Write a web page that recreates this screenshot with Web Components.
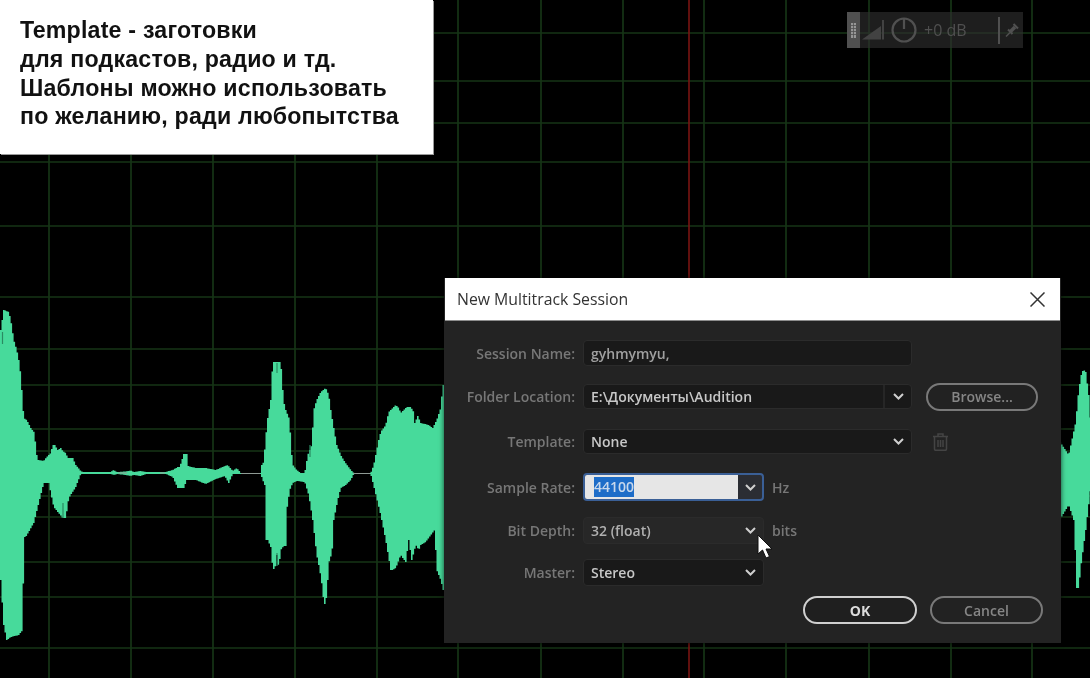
<!DOCTYPE html>
<html lang="ru">
<head>
<meta charset="utf-8">
<title>New Multitrack Session</title>
<style>
  html, body { margin: 0; background: #000; overflow: hidden; }
</style>
</head>
<body>
<audio-stage>
  <note-card slot="overlay">
    <div>Template - заготовки</div>
    <div>для подкастов, радио и тд.</div>
    <div>Шаблоны можно использовать</div>
    <div>по желанию, ради любопытства</div>
  </note-card>
  <level-hud slot="overlay"></level-hud>
  <session-dialog slot="overlay" heading="New Multitrack Session">
    <form-row style="margin-top:19px;height:26px">
      <span slot="label">Session Name:</span>
      <drop-field style="width:329px;color:#a0a0a0" noarrow>gyhmymyu,</drop-field>
    </form-row>
    <form-row style="margin-top:18px;height:25px">
      <span slot="label">Folder Location:</span>
      <drop-field style="width:329px" split>E:\Документы\Audition</drop-field>
      <pill-button slot="after" style="margin-left:14px;width:112px">Browse...</pill-button>
    </form-row>
    <form-row style="margin-top:20px;height:25px">
      <span slot="label">Template:</span>
      <drop-field style="width:329px">None</drop-field>
      <trash-icon slot="after" style="margin-left:21px"></trash-icon>
    </form-row>
    <form-row style="margin-top:19px;height:28px">
      <span slot="label">Sample Rate:</span>
      <drop-field style="width:181px" focused><mark>44100</mark></drop-field>
      <span slot="after" class="unit">Hz</span>
    </form-row>
    <form-row style="margin-top:16px;height:27px">
      <span slot="label">Bit Depth:</span>
      <drop-field style="width:181px" hovered>32 (float)</drop-field>
      <span slot="after" class="unit">bits</span>
    </form-row>
    <form-row style="margin-top:15px;height:27px">
      <span slot="label">Master:</span>
      <drop-field style="width:181px">Stereo</drop-field>
    </form-row>
    <div slot="footer" style="display:flex;gap:13px">
      <pill-button primary style="width:114px">OK</pill-button>
      <pill-button style="width:113px">Cancel</pill-button>
    </div>
  </session-dialog>
  <mouse-pointer slot="overlay"></mouse-pointer>
</audio-stage>

<script>
// waveform outline, read off the reference: [x, y] pairs, upper and lower edge
const upperEdge = [[0,330],[3,310],[8,312],[10,320],[13,340],[16,350],[19,365],[21,390],[23,418],[26,420],[30,428],[34,433],[35,450],[37,460],[43,461],[46,457],[50,453],[52,445],[54,445],[57,450],[60,448],[62,451],[65,453],[67,458],[72,458],[75,465],[80,471],[82,472],
  [110,472],[113,470],[116,472],[125,471.5],[130,470.5],[133,472],[140,471],[145,472],[165,472],[172,470],[177,467],[179,467],[183,454],[186,454],[187,466],[195,468],[205,468],[215,470],[224,466],[227,465],[232,471],[236,468],[240,473],[260,473],[261,465],[263,462],[265,437],[267,418],[270,400],[272,362],[280,362],[282,390],[283,402],[285,410],[289,420],[290,445],[292,465],[296,470],[300,473],[304,473],[307,455],[309,450],[311,445],[313,410],[316,400],[320,392],[325,388],[328,395],[330,410],[333,428],[336,445],[340,455],[344,462],[350,470],[353,473],[370,473],[373,465],[378,440],[380,432],[385,425],[388,412],[392,408],[395,405],[398,408],[400,413],[403,410],[406,407],[410,407],[413,412],[414,423],[417,416],[420,423],[428,425],[432,428],[436,420],[440,408],[442,385],[446,385]];
const lowerEdge = [[0,580],[3,625],[6,640],[10,637],[18,635],[22,630],[23,537],[25,537],[33,523],[37,507],[43,483],[48,483],[53,507],[62,518],[65,518],[68,498],[75,487],[80,474],[82,474],
  [110,474],[113,475],[116,474],[125,475],[130,476],[133,475],[140,476],[145,474],[165,474],[172,477],[177,488],[183,488],[186,480],[195,480],[205,484],[215,479],[224,476],[228,483],[232,474],[260,474],[262,480],[264,485],[265,540],[267,540],[270,547],[272,568],[274,570],[276,555],[278,568],[280,550],[283,546],[286,546],[286,510],[289,490],[292,483],[296,481],[304,482],[308,495],[312,520],[316,555],[319,570],[322,590],[323,604],[325,604],[327,580],[329,555],[331,558],[333,520],[337,500],[340,488],[345,485],[350,480],[353,474],[370,474],[374,490],[380,515],[385,540],[390,570],[392,570],[395,568],[400,555],[402,558],[405,562],[408,540],[411,560],[415,545],[418,550],[420,545],[425,542],[430,535],[434,530],[436,570],[440,580],[443,592],[446,595]];
const upperRight = [[1058,440],[1060,443],[1068,455],[1075,422],[1078,390],[1081,372],[1083,370],[1085,372],[1088,395],[1090,425]];
const lowerRight = [[1058,520],[1060,518],[1068,505],[1073,520],[1075,560],[1076,588],[1078,588],[1080,567],[1085,530],[1090,487]];

function edgeAt(edge, x) {
  for (let i = 1; i < edge.length; i++) {
    if (x <= edge[i][0]) {
      const a = edge[i - 1], b = edge[i];
      const t = (x - a[0]) / ((b[0] - a[0]) || 1);
      return a[1] + (b[1] - a[1]) * t;
    }
  }
  return edge[edge.length - 1][1];
}

function wavePath(top, bottom, from, to) {
  let d = '';
  for (let x = from; x < to; x += 1.5) {
    const y1 = edgeAt(top, x).toFixed(1);
    const y2 = edgeAt(bottom, x).toFixed(1);
    d += `M${x} ${y1}H${x + 1.6}V${y2}H${x}Z`;
  }
  return d;
}

const stageTemplate = document.createElement('template');
stageTemplate.innerHTML = `
  <style>
    :host { display: block; width: 1090px; height: 678px; position: relative; background: #000; overflow: hidden; filter: blur(0.55px); }
    svg { display: block; }
    .line { stroke: #163416; stroke-width: 1.7; }
  </style>
  <svg width="1090" height="678" viewBox="0 0 1090 678"></svg>
  <slot name="overlay"></slot>
`;

class AudioStage extends HTMLElement {
  connectedCallback() {
    const root = this.attachShadow({ mode: 'open' });
    root.appendChild(stageTemplate.content.cloneNode(true));
    const cols = [49, 131, 213, 295, 377, 458, 541, 623, 704, 786, 869, 951, 1032];
    const rows = [33, 81, 123, 162, 226, 297, 349, 385, 429, 451, 496, 517, 562, 597, 648];
    let lines = '';
    cols.forEach(x => { lines += `<line class="line" x1="${x}" x2="${x}" y1="0" y2="678"/>`; });
    rows.forEach(y => { lines += `<line class="line" x1="0" x2="1090" y1="${y}" y2="${y}"/>`; });
    root.querySelector('svg').innerHTML = `
      ${lines}
      <line x1="689" x2="689" y1="0" y2="678" stroke="#7a1512" stroke-width="1.6"/>
      <path fill="#47da9b" d="${wavePath(upperEdge, lowerEdge, 0, 446)}${wavePath(upperRight, lowerRight, 1058, 1090)}"/>
      <path stroke="#8f9a94" stroke-width="1.2" fill="none" d="M241 473.5H260M353 473.5H370M118 473H127M160 473H165"/>
      <path stroke="#2a8a62" stroke-width="1.2" fill="none" d="M2.5 332V344M277 363V373M310 445V457M277 553V566M63 503V518"/>
    `;
  }
}

const noteTemplate = document.createElement('template');
noteTemplate.innerHTML = `
  <style>
    :host { display: block; position: absolute; left: 0; top: 0; width: 413px; height: 134px; padding: 16px 0 4px 20px; background: #fff; box-shadow: 1px 1px 0 #9a9a9a;
      font: 700 23.2px/28.8px "Liberation Sans", Arial, sans-serif; color: #111; letter-spacing: .2px; white-space: nowrap; }
  </style>
  <slot></slot>
`;

class NoteCard extends HTMLElement {
  connectedCallback() {
    this.attachShadow({ mode: 'open' }).appendChild(noteTemplate.content.cloneNode(true));
  }
}

const hudTemplate = document.createElement('template');
hudTemplate.innerHTML = `
  <style>
    :host { display: flex; align-items: center; position: absolute; left: 847px; top: 12px; width: 176px; height: 36px; background: rgba(48,48,48,.62);
      font: 400 16px "Open Sans", sans-serif; color: #505050; }
    .grip { width: 13px; height: 100%; background: #505050; display: flex; align-items: center; justify-content: center; }
    .meter { margin-left: 2px; }
    .knob { margin-left: 6px; }
    .db { margin-left: 7px; width: 74px; }
    .sep { width: 2px; height: 27px; background: #505050; }
    .pin { margin-left: 5px; }
  </style>
  <div class="grip">
    <svg width="5" height="15" viewBox="0 0 5 15"><path d="M0 0h5v15H0z" fill="#969696"/><path d="M0 2.5h5M0 5.5h5M0 8.5h5M0 11.5h5M2.5 0v15" stroke="#505050" stroke-width=".8"/></svg>
  </div>
  <svg class="meter" width="23" height="20" viewBox="0 0 23 20" fill="#424242">
    <path d="M0 19.500L19 6v13.500zM20 19.500V0h2v19.500z"/>
  </svg>
  <svg class="knob" width="26" height="26" viewBox="0 0 26 26" fill="none" stroke="#505050" stroke-width="2.200">
    <circle cx="13" cy="13" r="11.500"/><path d="M13 1v11"/>
  </svg>
  <span class="db">+0 dB</span>
  <span class="sep"></span>
  <svg class="pin" width="14" height="14" viewBox="0 0 14 14" fill="none" stroke="#505050">
    <path d="M1 13.500L5 9.500" stroke-width="1.500"/>
    <path d="M5 9l5-5" stroke-width="3.500"/>
    <path d="M3 6.500L7.500 11M8.500 1L13 5.500" stroke-width="2"/>
  </svg>
`;

class LevelHud extends HTMLElement {
  connectedCallback() {
    this.attachShadow({ mode: 'open' }).appendChild(hudTemplate.content.cloneNode(true));
  }
}

const dialogTemplate = document.createElement('template');
dialogTemplate.innerHTML = `
  <style>
    :host { display: flex; flex-direction: column; position: absolute; left: 444px; top: 278px; width: 617px; height: 365px; background: #232323;
      box-shadow: 0 0 5px rgba(0,0,0,.7); font: 600 14px "Open Sans", sans-serif; color: #cfcfcf; }
    .title { display: flex; align-items: center; justify-content: space-between; height: 42px; margin: 0 1px 0 1px; padding: 0 15px 0 12px; background: #fff; border-bottom: 1px solid #8d8d8d;
      font-weight: 400; font-size: 15.8px; color: #333; }
    .foot { display: flex; justify-content: flex-end; margin-top: 10px; padding-right: 18px; }
  </style>
  <div class="title">
    <span id="heading"></span>
    <svg width="15" height="15" viewBox="0 0 15 15" stroke="#333" stroke-width="1.500" fill="none"><path d="M.5.5l14 14M14.500.5l-14 14"/></svg>
  </div>
  <slot></slot>
  <div class="foot"><slot name="footer"></slot></div>
`;

class SessionDialog extends HTMLElement {
  connectedCallback() {
    const root = this.attachShadow({ mode: 'open' });
    root.appendChild(dialogTemplate.content.cloneNode(true));
    root.getElementById('heading').textContent = this.getAttribute('heading');
  }
}

const rowTemplate = document.createElement('template');
rowTemplate.innerHTML = `
  <style>
    :host { display: flex; align-items: center; }
    .label { width: 131px; margin-right: 8px; text-align: right; color: #777; white-space: nowrap; }
    ::slotted(.unit) { margin-left: 8px; color: #777; }
  </style>
  <div class="label"><slot name="label"></slot></div>
  <slot></slot>
  <slot name="after"></slot>
`;

class FormRow extends HTMLElement {
  connectedCallback() {
    this.attachShadow({ mode: 'open' }).appendChild(rowTemplate.content.cloneNode(true));
  }
}

const fieldTemplate = document.createElement('template');
fieldTemplate.innerHTML = `
  <style>
    :host { display: flex; height: 100%; box-sizing: border-box; border: 1px solid #2b2b2b; border-radius: 4px; background: #191919; color: #c8c8c8; overflow: hidden; }
    .value { flex: 1; padding-left: 7px; display: flex; align-items: center; white-space: nowrap; }
    .arrow { width: 26px; display: flex; align-items: center; justify-content: center; }
    :host([noarrow]) .arrow { display: none; }
    :host([split]) .arrow { border-left: 2px solid #262626; }
    :host([hovered]) { background: #272727; color: #b0b0b0; }
    :host([focused]) { border: 2px solid #3a5f96; background: #2b2d33; }
    :host([focused]) .value { background: #e6e6e6; padding-left: 9px; }
    :host([focused]) .arrow { width: 24px; }
    ::slotted(mark) { background: #1e6dc8; color: #c8d8ec; line-height: 20px; }
  </style>
  <div class="value"><slot></slot></div>
  <div class="arrow">
    <svg width="11" height="7" viewBox="0 0 11 7" fill="none" stroke="#cfcfcf" stroke-width="2"><path d="M1 1l4.500 4.500L10 1"/></svg>
  </div>
`;

class DropField extends HTMLElement {
  connectedCallback() {
    this.attachShadow({ mode: 'open' }).appendChild(fieldTemplate.content.cloneNode(true));
  }
}

const pillTemplate = document.createElement('template');
pillTemplate.innerHTML = `
  <style>
    :host { display: flex; flex: none; align-items: center; justify-content: center; box-sizing: border-box; height: 28px; border: 2px solid #797979; border-radius: 14px; color: #868686; background: #222; font-weight: 600; }
    :host([primary]) { border-color: #cfcfcf; color: #dcdcdc; background: #1f1f1f; font-weight: 700; }
  </style>
  <slot></slot>
`;

class PillButton extends HTMLElement {
  connectedCallback() {
    this.attachShadow({ mode: 'open' }).appendChild(pillTemplate.content.cloneNode(true));
  }
}

class TrashIcon extends HTMLElement {
  connectedCallback() {
    this.attachShadow({ mode: 'open' }).innerHTML = `
      <style>:host { display: block; width: 15px; height: 18px; } svg { display: block; }</style>
      <svg width="15" height="18" viewBox="0 0 15 18" fill="none" stroke="#444" stroke-width="1.500">
        <path d="M0 3.500h15M5 3V1h5v2"/>
        <path d="M1.500 4v12a1.200 1.200 0 0 0 1.200 1.200h9.600a1.200 1.200 0 0 0 1.200-1.200V4"/>
        <path d="M5 7v7M7.500 7v7M10 7v7"/>
      </svg>`;
  }
}

class MousePointer extends HTMLElement {
  connectedCallback() {
    this.attachShadow({ mode: 'open' }).innerHTML = `
      <style>:host { display: block; position: absolute; left: 757px; top: 534px; width: 20px; height: 28px; } svg { display: block; }</style>
      <svg width="20" height="28" viewBox="0 0 20 28">
        <path d="M1 1v19l4.500-4 3.500 8 3.500-1.500-3.500-7.500H15z" fill="#fff" stroke="#111" stroke-width="1"/>
      </svg>`;
  }
}

customElements.define('audio-stage', AudioStage);
customElements.define('note-card', NoteCard);
customElements.define('level-hud', LevelHud);
customElements.define('session-dialog', SessionDialog);
customElements.define('form-row', FormRow);
customElements.define('drop-field', DropField);
customElements.define('pill-button', PillButton);
customElements.define('trash-icon', TrashIcon);
customElements.define('mouse-pointer', MousePointer);
</script>
</body>
</html>
